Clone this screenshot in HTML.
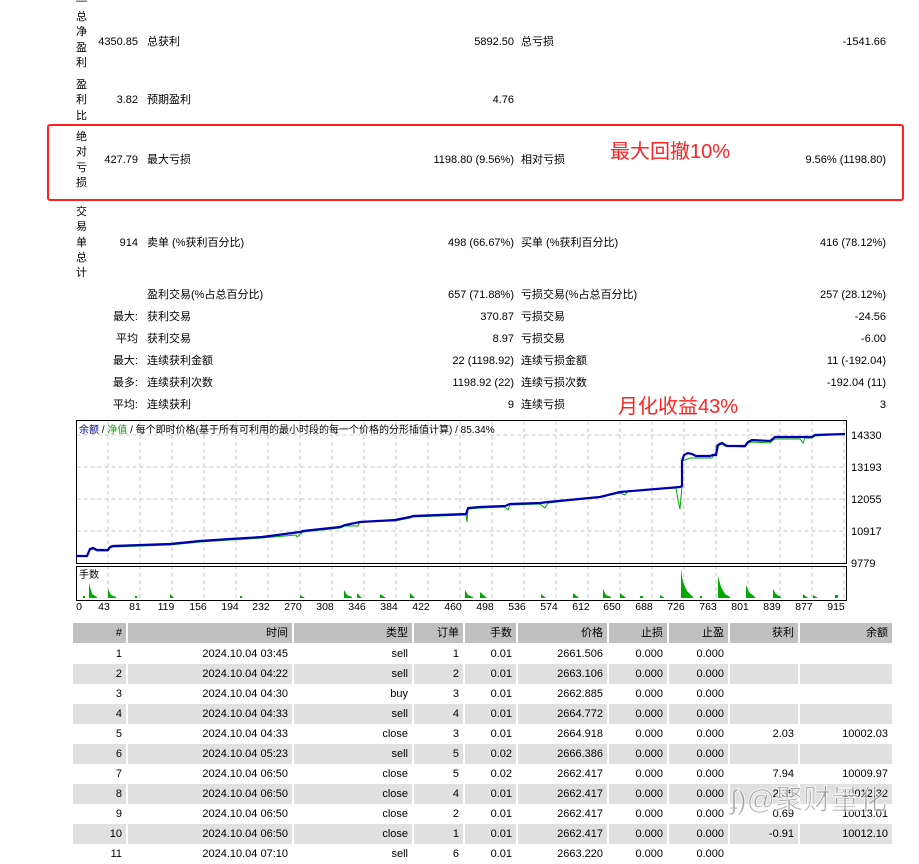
<!DOCTYPE html>
<html><head><meta charset="utf-8"><style>
*{margin:0;padding:0;box-sizing:border-box}
body{width:919px;height:851px;background:#fff;position:relative;overflow:hidden;font-family:"Liberation Sans","Noto Sans CJK SC",sans-serif;font-size:11px;color:#000}
.a{position:absolute;white-space:nowrap;line-height:14px}
.r{text-align:right}
.v{position:absolute;left:76px;width:12px;line-height:15.3px;font-size:11px}
.row{position:absolute;left:73px;display:flex;height:20px;line-height:20px;font-size:11px}
.row div{margin-right:2px;text-align:right;padding-right:4px;height:20px}
.row div:last-child{margin-right:0}
.g div{background:#e0e0e0}
.h div{background:#c0c0c0}
</style></head><body>
<div class="v" style="top:-6px">—</div>
<div class="v" style="top:10px">总<br>净<br>盈<br>利</div>
<div class="a r" style="top:35px;left:80px;width:58px">4350.85</div>
<div class="a" style="top:35px;left:147px">总获利</div>
<div class="a r" style="top:35px;left:400px;width:114px">5892.50</div>
<div class="a" style="top:35px;left:521px">总亏损</div>
<div class="a r" style="top:35px;left:760px;width:126px">-1541.66</div>

<div class="v" style="top:78px">盈<br>利<br>比</div>
<div class="a r" style="top:93px;left:80px;width:58px">3.82</div>
<div class="a" style="top:93px;left:147px">预期盈利</div>
<div class="a r" style="top:93px;left:400px;width:114px">4.76</div>

<div style="position:absolute;left:47px;top:124px;width:857px;height:77px;border:2px solid #f22;border-radius:3px"></div>
<div class="v" style="top:130px">绝<br>对<br>亏<br>损</div>
<div class="a r" style="top:153px;left:80px;width:58px">427.79</div>
<div class="a" style="top:153px;left:147px">最大亏损</div>
<div class="a r" style="top:153px;left:380px;width:134px">1198.80 (9.56%)</div>
<div class="a" style="top:153px;left:521px">相对亏损</div>
<div class="a r" style="top:153px;left:760px;width:126px">9.56% (1198.80)</div>
<div class="a" style="top:139px;left:610px;font-size:20px;line-height:26px;color:#f22">最大回撤10%</div>

<div class="v" style="top:205px">交<br>易<br>单<br>总<br>计</div>
<div class="a r" style="top:236px;left:80px;width:58px">914</div>
<div class="a" style="top:236px;left:147px">卖单 (%获利百分比)</div>
<div class="a r" style="top:236px;left:380px;width:134px">498 (66.67%)</div>
<div class="a" style="top:236px;left:521px">买单 (%获利百分比)</div>
<div class="a r" style="top:236px;left:760px;width:126px">416 (78.12%)</div>

<div class="a" style="top:288px;left:147px">盈利交易(%占总百分比)</div>
<div class="a r" style="top:288px;left:380px;width:134px">657 (71.88%)</div>
<div class="a" style="top:288px;left:521px">亏损交易(%占总百分比)</div>
<div class="a r" style="top:288px;left:760px;width:126px">257 (28.12%)</div>

<div class="a r" style="top:310px;left:80px;width:58px">最大:</div>
<div class="a" style="top:310px;left:147px">获利交易</div>
<div class="a r" style="top:310px;left:380px;width:134px">370.87</div>
<div class="a" style="top:310px;left:521px">亏损交易</div>
<div class="a r" style="top:310px;left:760px;width:126px">-24.56</div>

<div class="a r" style="top:332px;left:80px;width:58px">平均</div>
<div class="a" style="top:332px;left:147px">获利交易</div>
<div class="a r" style="top:332px;left:380px;width:134px">8.97</div>
<div class="a" style="top:332px;left:521px">亏损交易</div>
<div class="a r" style="top:332px;left:760px;width:126px">-6.00</div>

<div class="a r" style="top:354px;left:80px;width:58px">最大:</div>
<div class="a" style="top:354px;left:147px">连续获利金额</div>
<div class="a r" style="top:354px;left:380px;width:134px">22 (1198.92)</div>
<div class="a" style="top:354px;left:521px">连续亏损金额</div>
<div class="a r" style="top:354px;left:760px;width:126px">11 (-192.04)</div>

<div class="a r" style="top:376px;left:80px;width:58px">最多:</div>
<div class="a" style="top:376px;left:147px">连续获利次数</div>
<div class="a r" style="top:376px;left:380px;width:134px">1198.92 (22)</div>
<div class="a" style="top:376px;left:521px">连续亏损次数</div>
<div class="a r" style="top:376px;left:760px;width:126px">-192.04 (11)</div>

<div class="a r" style="top:398px;left:80px;width:58px">平均:</div>
<div class="a" style="top:398px;left:147px">连续获利</div>
<div class="a r" style="top:398px;left:380px;width:134px">9</div>
<div class="a" style="top:398px;left:521px">连续亏损</div>
<div class="a r" style="top:398px;left:760px;width:126px">3</div>
<div class="a" style="top:394px;left:618px;font-size:20px;line-height:26px;color:#f22">月化收益43%</div>

<svg style="position:absolute;left:0;top:0" width="919" height="851">
<g stroke="#c8c8c8" stroke-dasharray="4,3" stroke-width="1">
<path d="M108 421V563M140 421V563M172 421V563M204 421V563M236 421V563M268 421V563M300 421V563M332 421V563M364 421V563M396 421V563M428 421V563M460 421V563M492 421V563M524 421V563M556 421V563M588 421V563M620 421V563M652 421V563M684 421V563M716 421V563M748 421V563M780 421V563M812 421V563M844 421V563"/>
<path d="M108 566V599M140 566V599M172 566V599M204 566V599M236 566V599M268 566V599M300 566V599M332 566V599M364 566V599M396 566V599M428 566V599M460 566V599M492 566V599M524 566V599M556 566V599M588 566V599M620 566V599M652 566V599M684 566V599M716 566V599M748 566V599M780 566V599M812 566V599M844 566V599"/>
<path d="M76.5 435H847M76.5 467H847M76.5 499H847M76.5 531H847"/>
</g>
<rect x="76.5" y="420.5" width="770" height="143" fill="none" stroke="#000"/>
<rect x="76.5" y="566.5" width="770" height="34" fill="none" stroke="#000"/>
<path d="M76 556 L87 556 L90 550 L93 549 L97 551 L108 551 L110 548 L113 547 L170 545 L200 542 L230 540 L262 538 L296 535 L297 537 L303 532 L340 528 L345 526 L358 526 L360 522 L395 521 L410 518 L413 517 L466 515 L467 522 L468 509 L480 508 L505 507 L508 510 L510 505 L540 504 L545 508 L548 503 L600 497 L620 493 L625 495 L628 491 L676 488 L678 500 L680 509 L682 486" fill="none" stroke="#0a0" stroke-width="1"/>
<path d="M682 461 L690 458 L712 458 L716 452 L716 446 L720 443 L725 446 L745 447 L748 443 L752 442 L770 443 L772 441 L775 439 L800 439 L803 443 L805 438 L812 438 L815 436 L845 434" fill="none" stroke="#0a0" stroke-width="1"/>
<path d="M76 556 L87 556 L90 549 L93 548 L97 550 L108 550 L110 547 L113 546 L170 544 L200 541 L230 539 L262 537 L300 532 L303 531 L340 527 L345 525 L360 522 L395 520 L410 517 L413 516 L466 514 L468 508 L480 507 L505 506 L510 504 L540 503 L548 502 L600 497 L620 492 L680 487 L682 486 L682 461 L684 455 L688 453 L692 454 L696 456 L710 456 L713 455 L716 455 L718 445 L722 443 L727 446 L745 446 L748 442 L752 440 L770 441 L775 437 L812 437 L815 435 L845 434" fill="none" stroke="#0000b4" stroke-width="2.2"/>
<g fill="#0a0">
<path d="M89 598V583L92 594L97 597L97 598Z M108 598V589L111 595L116 597V598Z M170 598V594L174 598Z M300 598V595L305 598Z M344 598V590L347 595L352 597V598Z M357 598V593L362 598Z M380 598V594L386 598Z M410 598V593L415 598Z M465 598V590L468 595L473 597V598Z M480 598V592L487 598Z M541 598V594L546 598Z M573 598V593L579 598Z M603 598V589L606 595L611 597V598Z M620 598V593L626 598Z M660 598V595L665 598Z M681 598V569L683 582L687 591L693 597V598Z M718 598V576L721 587L725 594L730 597V598Z M746 598V585L749 592L755 597V598Z M773 598V589L776 594L781 597V598Z M803 598V594L808 598Z M813 598V595L818 598Z M83 598V596H85V598Z M135 598V596H137V598Z M240 598V596H242V598Z M640 598V596H643V598Z M700 598V596H702V598Z M835 598V595H838V598Z"/>
</g>
<g font-family="Liberation Sans,Noto Sans CJK SC,sans-serif" font-size="10" fill="#000">
<text x="79" y="433"><tspan fill="#00008b">余额</tspan> / <tspan fill="#0a0">净值</tspan> / 每个即时价格(基于所有可利用的最小时段的每一个价格的分形插值计算) / 85.34%</text>
<text x="79" y="578">手数</text>
<text x="851" y="439" font-size="11">14330</text>
<text x="851" y="471" font-size="11">13193</text>
<text x="851" y="503" font-size="11">12055</text>
<text x="851" y="535" font-size="11">10917</text>
<text x="851" y="567" font-size="11">9779</text>
<g font-size="10.5" text-anchor="middle">
<text x="79" y="610">0</text><text x="104" y="610">43</text><text x="135" y="610">81</text><text x="166" y="610">119</text><text x="198" y="610">156</text><text x="230" y="610">194</text><text x="261" y="610">232</text><text x="293" y="610">270</text><text x="325" y="610">308</text><text x="357" y="610">346</text><text x="389" y="610">384</text><text x="421" y="610">422</text><text x="453" y="610">460</text><text x="485" y="610">498</text><text x="517" y="610">536</text><text x="549" y="610">574</text><text x="581" y="610">612</text><text x="612" y="610">650</text><text x="644" y="610">688</text><text x="676" y="610">726</text><text x="708" y="610">763</text><text x="740" y="610">801</text><text x="772" y="610">839</text><text x="804" y="610">877</text><text x="836" y="610">915</text>
</g></g>
</svg>

<div class="row h" style="top:623px"><div style="width:53px">#</div><div style="width:164px">时间</div><div style="width:118px">类型</div><div style="width:49px">订单</div><div style="width:51px">手数</div><div style="width:89px">价格</div><div style="width:58px">止损</div><div style="width:59px">止盈</div><div style="width:68px">获利</div><div style="width:92px">余额</div></div>
<div class="row" style="top:644px"><div style="width:53px">1</div><div style="width:164px">2024.10.04 03:45</div><div style="width:118px">sell</div><div style="width:49px">1</div><div style="width:51px">0.01</div><div style="width:89px">2661.506</div><div style="width:58px">0.000</div><div style="width:59px">0.000</div><div style="width:68px"></div><div style="width:92px"></div></div>
<div class="row g" style="top:664px"><div style="width:53px">2</div><div style="width:164px">2024.10.04 04:22</div><div style="width:118px">sell</div><div style="width:49px">2</div><div style="width:51px">0.01</div><div style="width:89px">2663.106</div><div style="width:58px">0.000</div><div style="width:59px">0.000</div><div style="width:68px"></div><div style="width:92px"></div></div>
<div class="row" style="top:684px"><div style="width:53px">3</div><div style="width:164px">2024.10.04 04:30</div><div style="width:118px">buy</div><div style="width:49px">3</div><div style="width:51px">0.01</div><div style="width:89px">2662.885</div><div style="width:58px">0.000</div><div style="width:59px">0.000</div><div style="width:68px"></div><div style="width:92px"></div></div>
<div class="row g" style="top:704px"><div style="width:53px">4</div><div style="width:164px">2024.10.04 04:33</div><div style="width:118px">sell</div><div style="width:49px">4</div><div style="width:51px">0.01</div><div style="width:89px">2664.772</div><div style="width:58px">0.000</div><div style="width:59px">0.000</div><div style="width:68px"></div><div style="width:92px"></div></div>
<div class="row" style="top:724px"><div style="width:53px">5</div><div style="width:164px">2024.10.04 04:33</div><div style="width:118px">close</div><div style="width:49px">3</div><div style="width:51px">0.01</div><div style="width:89px">2664.918</div><div style="width:58px">0.000</div><div style="width:59px">0.000</div><div style="width:68px">2.03</div><div style="width:92px">10002.03</div></div>
<div class="row g" style="top:744px"><div style="width:53px">6</div><div style="width:164px">2024.10.04 05:23</div><div style="width:118px">sell</div><div style="width:49px">5</div><div style="width:51px">0.02</div><div style="width:89px">2666.386</div><div style="width:58px">0.000</div><div style="width:59px">0.000</div><div style="width:68px"></div><div style="width:92px"></div></div>
<div class="row" style="top:764px"><div style="width:53px">7</div><div style="width:164px">2024.10.04 06:50</div><div style="width:118px">close</div><div style="width:49px">5</div><div style="width:51px">0.02</div><div style="width:89px">2662.417</div><div style="width:58px">0.000</div><div style="width:59px">0.000</div><div style="width:68px">7.94</div><div style="width:92px">10009.97</div></div>
<div class="row g" style="top:784px"><div style="width:53px">8</div><div style="width:164px">2024.10.04 06:50</div><div style="width:118px">close</div><div style="width:49px">4</div><div style="width:51px">0.01</div><div style="width:89px">2662.417</div><div style="width:58px">0.000</div><div style="width:59px">0.000</div><div style="width:68px">2.35</div><div style="width:92px">10012.32</div></div>
<div class="row" style="top:804px"><div style="width:53px">9</div><div style="width:164px">2024.10.04 06:50</div><div style="width:118px">close</div><div style="width:49px">2</div><div style="width:51px">0.01</div><div style="width:89px">2662.417</div><div style="width:58px">0.000</div><div style="width:59px">0.000</div><div style="width:68px">0.69</div><div style="width:92px">10013.01</div></div>
<div class="row g" style="top:824px"><div style="width:53px">10</div><div style="width:164px">2024.10.04 06:50</div><div style="width:118px">close</div><div style="width:49px">1</div><div style="width:51px">0.01</div><div style="width:89px">2662.417</div><div style="width:58px">0.000</div><div style="width:59px">0.000</div><div style="width:68px">-0.91</div><div style="width:92px">10012.10</div></div>
<div class="row" style="top:844px"><div style="width:53px">11</div><div style="width:164px">2024.10.04 07:10</div><div style="width:118px">sell</div><div style="width:49px">6</div><div style="width:51px">0.01</div><div style="width:89px">2663.220</div><div style="width:58px">0.000</div><div style="width:59px">0.000</div><div style="width:68px"></div><div style="width:92px"></div></div>

<div class="a" style="top:782px;left:730px;font-size:28px;line-height:36px;color:rgba(110,110,110,0.6);-webkit-text-stroke:1px rgba(255,255,255,0.8)">ʄ)@聚财量化</div>
</body></html>
